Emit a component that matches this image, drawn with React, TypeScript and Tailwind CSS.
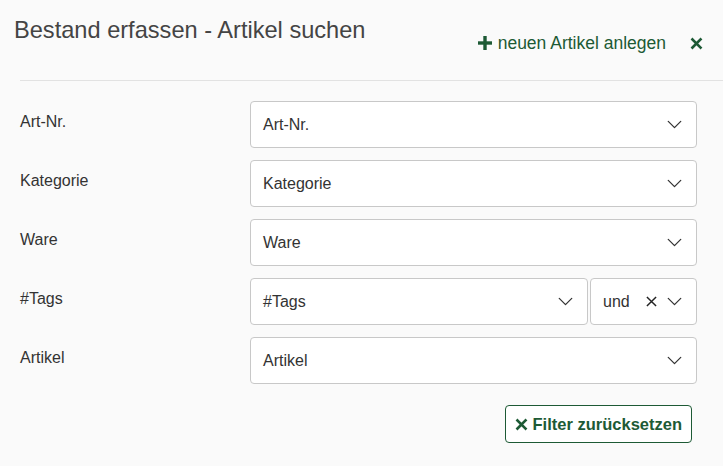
import { ChevronDown } from "lucide-react";

type Row = {
    label: string
    placeholder: string
    tags?: boolean
}

const ROWS: Row[] = [
    { label: "Art-Nr.", placeholder: "Art-Nr." },
    { label: "Kategorie", placeholder: "Kategorie" },
    { label: "Ware", placeholder: "Ware" },
    { label: "#Tags", placeholder: "#Tags", tags: true },
    { label: "Artikel", placeholder: "Artikel" },
];

function PlusIcon({ className }: { className?: string }) {
    return (
        <svg viewBox="0 0 16 16" className={className} fill="currentColor">
            <rect x="6.3" y="1" width="3.4" height="14" />
            <rect x="1" y="6.3" width="14" height="3.4" />
        </svg>
    )
}

function TimesIcon({ className }: { className?: string }) {
    return (
        <svg viewBox="0 0 16 16" className={className} fill="none" stroke="currentColor" strokeWidth="3.2" strokeLinecap="square">
            <path d="M3 3 L13 13 M13 3 L3 13" />
        </svg>
    )
}

function Select({ placeholder, className }: { placeholder: string, className?: string }) {
    return (
        <div className={"flex h-[47px] items-center rounded border border-[#c8c8c8] bg-white pl-3 pr-[9px] " + (className ?? "")}>
            <span className="flex-1 text-[16px] text-[#333]">{placeholder}</span>
            <ChevronDown className="h-[25px] w-[25px] text-[#333]" strokeWidth={1.2} />
        </div>
    )
}

export default function App() {
    return (
        <div className="h-[466px] w-[723px] bg-[#fafafa] text-[#333]" style={{ fontFamily: '"Helvetica Neue", "Liberation Sans", Arial, sans-serif' }}>
            <div className="flex items-start justify-between pl-[14px] pr-[20px]">
                <h1 className="pt-[16px] text-[23.6px] font-light leading-[28px] text-[#444]">Bestand erfassen - Artikel suchen</h1>
                <div className="flex items-center pt-[32px] text-[#1d5a35]">
                    <PlusIcon className="mr-[5px] h-[16px] w-[16px]" />
                    <span className="text-[17.5px] leading-[22px]">neuen Artikel anlegen</span>
                    <TimesIcon className="ml-[24px] h-[13px] w-[13px]" />
                </div>
            </div>
            <div className="ml-[20px] mt-[26px] border-t border-[#e2e2e2]" />
            <div className="flex flex-col gap-[12px] pl-[20px] pr-[26px] pt-[20px]">
                {ROWS.map((row) => (
                    <div key={row.label} className="flex items-start">
                        <div className="w-[230px] pt-[11px] text-[16px] leading-[20px]">{row.label}</div>
                        {row.tags ? (
                            <div className="flex flex-1 gap-[2px]">
                                <Select placeholder={row.placeholder} className="flex-1" />
                                <div className="flex h-[47px] w-[107px] items-center rounded border border-[#c8c8c8] bg-white pl-3 pr-[9px]">
                                    <span className="flex-1 text-[16px]">und</span>
                                    <svg viewBox="0 0 12 12" className="mr-[5px] h-[11px] w-[11px]" fill="none" stroke="#222" strokeWidth="1.6">
                                        <path d="M1 1 L11 11 M11 1 L1 11" />
                                    </svg>
                                    <ChevronDown className="h-[25px] w-[25px]" strokeWidth={1.2} />
                                </div>
                            </div>
                        ) : (
                            <Select placeholder={row.placeholder} className="flex-1" />
                        )}
                    </div>
                ))}
            </div>
            <div className="flex justify-end pr-[31px] pt-[21px]">
                <button className="flex h-[38px] items-center rounded border border-[#1d5a35] bg-white px-[9px] text-[16.5px] font-semibold text-[#1d5a35]">
                    <TimesIcon className="mr-[5px] h-[13px] w-[13px]" />
                    Filter zurücksetzen
                </button>
            </div>
        </div>
    )
}
